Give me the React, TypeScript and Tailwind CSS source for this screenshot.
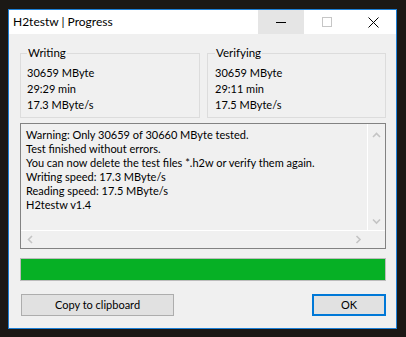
import React from "react";

const FONT = { fontFamily: 'Lato, "Noto Sans", sans-serif' };

function Chevron({ dir }: { dir: "up" | "down" | "left" | "right" }) {
  const d = {
    up: "M1 5 L4.5 1.5 L8 5",
    down: "M1 1.5 L4.5 5 L8 1.5",
    left: "M5 1 L1.5 4.5 L5 8",
    right: "M1.5 1 L5 4.5 L1.5 8",
  }[dir];
  const vert = dir === "up" || dir === "down";
  return (
    <svg width={vert ? 9 : 7} height={vert ? 7 : 9} viewBox={vert ? "0 0 9 7" : "0 0 7 9"}>
      <path d={d} fill="none" stroke="#c4c4c4" strokeWidth="1.6" />
    </svg>
  );
}

function Group({ title, lines, pad }: { title: string; lines: string[]; pad: string }) {
  return (
    <fieldset className={`h-[72px] border border-[#dcdcdc] ${pad}`}>
      <legend className="px-[1px] text-[11.5px] leading-[14px] text-black">{title}</legend>
      <div className="pt-[5px]">
        {lines.map((l) => (
          <div key={l} className="text-[11px] leading-[16px] text-black">{l}</div>
        ))}
      </div>
    </fieldset>
  );
}

const LOG = [
  "Warning: Only 30659 of 30660 MByte tested.",
  "Test finished without errors.",
  "You can now delete the test files *.h2w or verify them again.",
  "Writing speed: 17.3 MByte/s",
  "Reading speed: 17.5 MByte/s",
  "H2testw v1.4",
];

export default function App() {
  return (
    <div className="h-[337px] w-[406px] overflow-hidden bg-[#1b1815] pl-[8px] pt-[9px]" style={FONT}>
      <div className="flex h-[320px] w-[389px] flex-col border border-[#1c7fd6] bg-[#f0f0f0]">
        <header className="flex h-[24px] items-center bg-white">
          <div className="flex-1 pl-[4px] text-[12px] text-black">H2testw | Progress</div>
          <div className="flex h-full w-[46px] items-center justify-center bg-[#e5e5e5]">
            <div className="h-px w-[10px] bg-black" />
          </div>
          <div className="flex h-full w-[46px] items-center justify-center">
            <div className="h-[10px] w-[10px] border border-[#c6c6c6]" />
          </div>
          <div className="flex h-full w-[46px] items-center justify-center">
            <svg width="11" height="11" viewBox="0 0 11 11">
              <path d="M0.5 0.5 L10.5 10.5 M10.5 0.5 L0.5 10.5" stroke="#000" strokeWidth="1" />
            </svg>
          </div>
        </header>
        <main className="flex flex-1 flex-col pl-[11px] pr-[10px] pt-[12px]">
          <div className="flex gap-[7px]">
            <div className="w-[180px]">
              <Group title="Writing" lines={["30659 MByte", "29:29 min", "17.3 MByte/s"]} pad="pl-[6px]" />
            </div>
            <div className="w-[179px]">
              <Group title="Verifying" lines={["30659 MByte", "29:11 min", "17.5 MByte/s"]} pad="pl-[7px]" />
            </div>
          </div>
          <div className="mt-[5px] grid h-[126px] grid-cols-[1fr_17px] grid-rows-[1fr_17px] border border-[#828282]">
            <div className="border-b border-r border-white pl-[5px] pt-[4px]">
              {LOG.map((l) => (
                <div key={l} className="whitespace-nowrap text-[11px] leading-[14px] text-black">{l}</div>
              ))}
            </div>
            <div className="flex flex-col items-center justify-between border-b border-white pb-[5px] pt-[8px]">
              <Chevron dir="up" />
              <Chevron dir="down" />
            </div>
            <div className="flex items-center justify-between pl-[6px] pr-[6px]">
              <Chevron dir="left" />
              <Chevron dir="right" />
            </div>
            <div />
          </div>
          <div className="mt-[9px] h-[23px] border border-[#bcbcbc] bg-[#06b025]" />
          <div className="mt-[13px] flex items-center justify-between">
            <button className="ml-px h-[22px] w-[153px] border border-[#adadad] bg-[#e1e1e1] text-[11px] text-black">
              Copy to clipboard
            </button>
            <button className="h-[22px] w-[74px] border-2 border-[#0078d7] bg-[#e1e1e1] text-[11px] text-black">
              OK
            </button>
          </div>
        </main>
      </div>
    </div>
  );
}
